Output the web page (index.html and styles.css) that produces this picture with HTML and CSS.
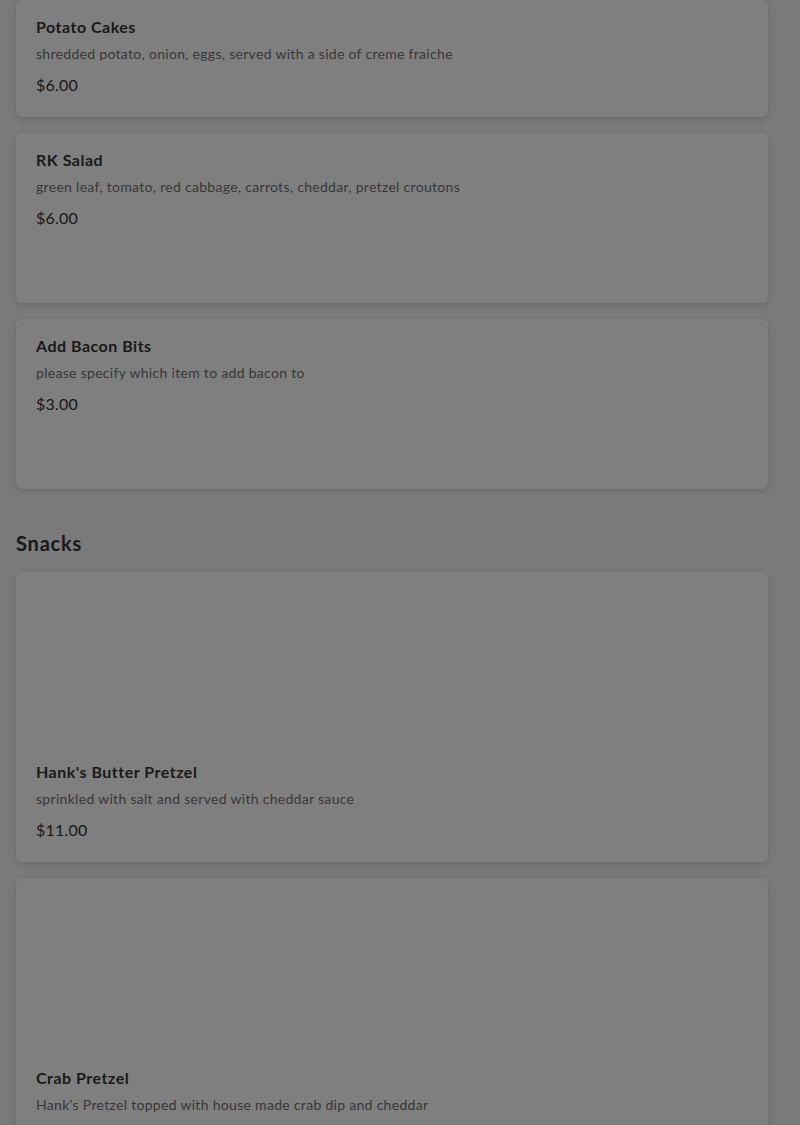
FILE: index.html
```html
<!DOCTYPE html>
<html>
<head>
<meta charset="utf-8">
<link rel="stylesheet" href="styles.css">
</head>
<body>
<main class="menu">
  <section class="section">
    <div class="card">
      <div class="card-body">
        <h3 class="item-title">Potato Cakes</h3>
        <p class="item-desc">shredded potato, onion, eggs, served with a side of creme fraiche</p>
        <p class="item-price">$6.00</p>
      </div>
    </div>
    <div class="card card-tall">
      <div class="card-body">
        <h3 class="item-title">RK Salad</h3>
        <p class="item-desc">green leaf, tomato, red cabbage, carrots, cheddar, pretzel croutons</p>
        <p class="item-price">$6.00</p>
      </div>
    </div>
    <div class="card card-tall">
      <div class="card-body">
        <h3 class="item-title">Add Bacon Bits</h3>
        <p class="item-desc">please specify which item to add bacon to</p>
        <p class="item-price">$3.00</p>
      </div>
    </div>
  </section>
  <section class="section">
    <h2 class="section-title">Snacks</h2>
    <div class="card">
      <div class="card-image"></div>
      <div class="card-body">
        <h3 class="item-title">Hank's Butter Pretzel</h3>
        <p class="item-desc">sprinkled with salt and served with cheddar sauce</p>
        <p class="item-price">$11.00</p>
      </div>
    </div>
    <div class="card">
      <div class="card-image"></div>
      <div class="card-body">
        <h3 class="item-title">Crab Pretzel</h3>
        <p class="item-desc">Hank's Pretzel topped with house made crab dip and cheddar</p>
      </div>
    </div>
  </section>
</main>
<div class="overlay"></div>
</body>
</html>
```
FILE: styles.css
```css
html, body {
  margin: 0;
  padding: 0;
}
body {
  background: #f4f4f4;
  font-family: "Lato", "Liberation Sans", sans-serif;
  color: #333;
  width: 800px;
  height: 1125px;
  overflow: hidden;
}
.menu {
  padding: 0 32px 0 16px;
  display: flex;
  flex-direction: column;
}
.section {
  display: flex;
  flex-direction: column;
  gap: 16px;
}
.section + .section {
  margin-top: 40px;
}
.section-title {
  margin: 0 0 -1px;
  font-size: 20px;
  line-height: 28px;
  font-weight: 700;
  color: #333;
  letter-spacing: 0.8px;
}
.card {
  background: #fff;
  border-radius: 6px;
  box-shadow: 0 2px 6px rgba(0,0,0,0.14);
  display: flex;
  flex-direction: column;
}
.card-tall {
  min-height: 170px;
}
.card-image {
  height: 173px;
}
.card-body {
  padding: 17px 20px 21px;
}
.item-title {
  margin: 0;
  font-size: 16px;
  line-height: 20px;
  font-weight: 700;
  color: #353535;
  letter-spacing: 0.5px;
}
.item-desc {
  margin: 7px 0 0;
  font-size: 14px;
  line-height: 20px;
  color: #707070;
  letter-spacing: 0.3px;
}
.item-price {
  margin: 10px 0 0;
  font-size: 16px;
  line-height: 22px;
  color: #333;
  letter-spacing: 0.2px;
}
.overlay {
  position: fixed;
  inset: 0;
  background: rgba(0,0,0,0.5);
}
```
